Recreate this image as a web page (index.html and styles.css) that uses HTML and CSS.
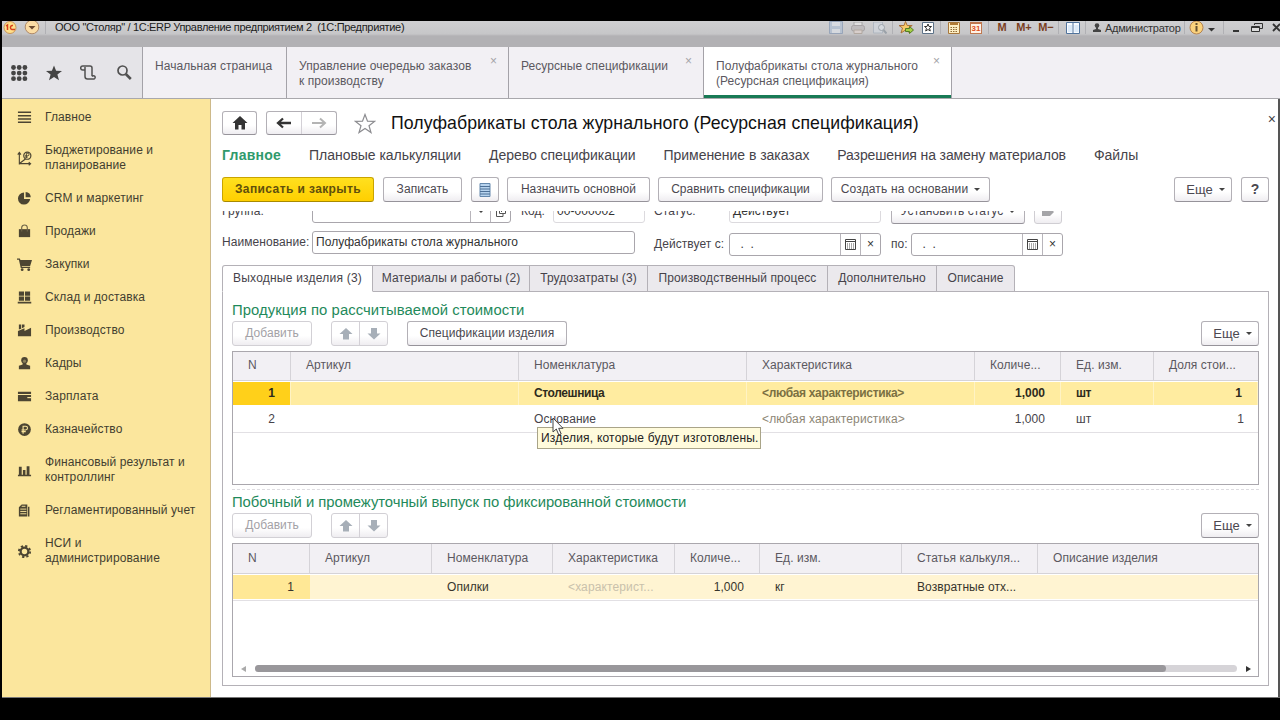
FILE: index.html
```html
<!DOCTYPE html>
<html lang="ru">
<head>
    <meta charset="UTF-8">
    <title>Полуфабрикаты стола журнального (Ресурсная спецификация)</title>
    <link rel="stylesheet" href="styles.css">
</head>
<body>
    <div class="window">
        <header class="titlebar">
            <svg class="logo" width="14" height="14" viewBox="0 0 14 14"><circle cx="7" cy="6.500" r="6" fill="#ffe08a" stroke="#c8955a"/><path d="M3 5l1.500-1v5M10 4.500a2 2 0 1 0-1 4h3" fill="none" stroke="#d8401c" stroke-width="1.500"/></svg>
            <svg class="menu-icon" width="16" height="14" viewBox="0 0 16 14"><circle cx="8" cy="6" r="6.800" fill="#fbdca4" stroke="#b08a68"/><path d="M4.500 5h7L8 8.500z" fill="#6d4a30"/></svg>
            <span class="sep"></span>
            <span class="app-title">ООО "Столяр" / 1С:ERP Управление предприятием 2 &nbsp;(1С:Предприятие)</span>
            <div class="sys-icons">
                <span class="slot faded"><svg width="14" height="13" viewBox="0 0 14 13"><path d="M.5.5h13v12H.5z" fill="#a9bdd6" stroke="#7189ac"/><path d="M3 1h8v4H3zM3 8h8v4H3z" fill="#e2e8f0"/></svg></span>
                <span class="slot faded"><svg width="14" height="12" viewBox="0 0 14 12"><rect x="3" y="0" width="8" height="4" fill="#eee" stroke="#888"/><rect x=".5" y="3.500" width="13" height="5.500" rx="2" fill="#b5b0b2" stroke="#8b8588"/><path d="M3 8h8v3.500H3z" fill="#e6d5cf" stroke="#a09080"/></svg></span>
                <span class="slot faded"><svg width="14" height="12" viewBox="0 0 14 12"><path d="M.5 0h9v11h-9z" fill="#d4dbe4" stroke="#9ba8b8"/><circle cx="8.500" cy="5.500" r="3" fill="#dfe7ee" stroke="#77838f"/><path d="M10.500 8l3 3.500" stroke="#77838f" stroke-width="2"/></svg></span>
                <span class="sep"></span>
                <span class="slot"><svg width="15" height="14" viewBox="0 0 15 14"><path d="M6.500.5l1.700 4h5L9.500 7l1.500 5-4.500-3L2 12l1.500-5L0 4.500h5z" fill="#f6ca6a" stroke="#a9713a"/><path d="M6.500 7.500h4V5.500l4 3.500-4 3.500V10.500h-4z" fill="#a6cf45" stroke="#547d24"/></svg></span>
                <span class="slot"><svg width="12" height="12" viewBox="0 0 12 12"><path d="M.5.5h11v11H.5z" fill="#fff" stroke="#5d7288"/><path d="M6 2l1 2.500h2.500l-2 1.700.8 2.800L6 7.500 3.700 9l.8-2.800-2-1.700H5z" fill="#fff" stroke="#333"/></svg></span>
                <span class="sep"></span>
                <span class="slot"><svg width="12" height="12" viewBox="0 0 12 12"><path d="M.5.5h11v11H.5z" fill="#fdeec4" stroke="#a8783c"/><path d="M2 2h8" stroke="#b07a35" stroke-width="2"/><path d="M2.500 5.500h7M2.500 7.500h7M2.500 9.500h7" stroke="#8e6b35" stroke-dasharray="1.500 1"/></svg></span>
                <span class="slot"><span class="calendar">31</span></span>
                <span class="sep"></span>
                <span class="slot mem">M</span>
                <span class="slot mem">M+</span>
                <span class="slot mem">M−</span>
                <span class="sep"></span>
                <span class="slot panels"><svg width="14" height="12" viewBox="0 0 14 12"><path d="M.5.5h13v11H.5z" fill="#f8fbff" stroke="#50739c"/><path d="M7 0v12" stroke="#50739c"/><path d="M2 3h4v7H2zM8.500 3h4v7h-4z" fill="#dceaf8"/></svg></span>
                <span class="sep"></span>
                <span class="user"><svg width="10" height="10" viewBox="0 0 10 10"><circle cx="5" cy="2.500" r="2.300" fill="#444"/><path d="M4 4h2v2l3 1v2H1V7l3-1z" fill="#444"/></svg><span class="user-name">Администратор</span></span>
                <span class="sep"></span>
                <span class="info"><svg width="15" height="14" viewBox="0 0 15 14"><circle cx="7.500" cy="6.500" r="6.500" fill="#fbd27c" stroke="#b58450"/><path d="M7.500 2v2M7.500 5v5.500" stroke="#665030" stroke-width="2"/></svg></span>
                <span class="info-arrow"><svg width="7" height="4"><path d="M0 0h7L3.500 3.500z" fill="#333"/></svg></span>
                <span class="sep"></span>
                <svg class="win-icons" width="54" height="12" viewBox="0 0 54 12"><path d="M7 9h6" stroke="#333" stroke-width="2"/><path d="M28.500 3V1.500h8v5H34" fill="none" stroke="#333"/><path d="M25.500 4.500h8v5h-8zM25.500 5.500h8" fill="#ddd" stroke="#333"/><path d="M47 2l7 7M54 2l-7 7" stroke="#333" stroke-width="1.800"/></svg>
            </div>
        </header>

        <nav class="open-tabs">
            <div class="tools">
                <svg width="18" height="18" viewBox="0 0 18 18" fill="#444"><g id="dots"><circle cx="3.500" cy="3.500" r="2.400"/><circle cx="9.200" cy="3.500" r="2.400"/><circle cx="14.900" cy="3.500" r="2.400"/></g><use href="#dots" y="5.600"/><use href="#dots" y="11.200"/></svg>
                <svg width="18" height="18" viewBox="0 0 18 18"><path d="M9 1.500l2.100 5.300 5.900.2-4.600 3.600 1.600 5.600L9 13l-5 3.200 1.600-5.600L1 7l5.900-.2z" fill="#444"/></svg>
                <svg width="18" height="18" viewBox="0 0 18 18" fill="none" stroke="#505050" stroke-width="1.500"><path d="M5 6H2.700a2 2 0 0 1 0-4H10a2 2 0 0 1 2 2v8M5 3v9.500a2.500 2.500 0 0 0 2.500 2.500H14a1.700 1.700 0 1 0-2-2.500"/></svg>
                <svg width="18" height="18" viewBox="0 0 18 18" fill="none" stroke="#505050"><circle cx="7.500" cy="6.500" r="4.500" stroke-width="1.700"/><path d="M10.800 10l5 5" stroke-width="2.600"/></svg>
            </div>
            <div class="open-tab tab-home">Начальная страница</div>
            <div class="open-tab tab-queue">Управление очередью заказов<br>к производству<span class="close">×</span></div>
            <div class="open-tab tab-specs">Ресурсные спецификации<span class="close">×</span></div>
            <div class="open-tab tab-current">Полуфабрикаты стола журнального<br>(Ресурсная спецификация)<span class="close">×</span></div>
        </nav>

        <div class="workspace">
            <aside class="sidebar">
                <a class="section"><svg viewBox="0 0 16 16"><path d="M1 2.500h14M1 6h14M1 9.500h14M1 13h14" stroke="#4c4532" stroke-width="1.600"/></svg><span>Главное</span></a>
                <a class="section"><svg viewBox="0 0 16 16" fill="none" stroke="#4c4532"><path d="M2.500 14.500V2M.8 3.800L2.500 1.500l1.700 2.300M2.500 13.500H14M12.500 11.800l2 1.700-2 1.700M3 13l6-4.500" stroke-width="1.200"/><circle cx="11" cy="5" r="3.800" stroke-width="1.300"/><path d="M10 7.500v-5h1.500a1.300 1.300 0 0 1 0 2.600H8.500M8.500 6.500h3"/></svg><span>Бюджетирование и<br>планирование</span></a>
                <a class="section"><svg viewBox="0 0 16 16" fill="#4c4532"><path d="M7.500 1.500v7H14a6.500 6.500 0 1 1-6.500-7z"/><path d="M9.200 1a6 6 0 0 1 5.500 5.700H9.200z"/></svg><span>CRM и маркетинг</span></a>
                <a class="section"><svg viewBox="0 0 16 16"><path d="M2 5.500h12V14H2z" fill="#4c4532"/><path d="M5 8V4a3 3 0 0 1 6 0v4" fill="none" stroke="#6d6448" stroke-width="1.200"/></svg><span>Продажи</span></a>
                <a class="section"><svg viewBox="0 0 16 16" fill="#4c4532"><path d="M0 1.500h3l.7 1.700H16L14 9.500H5l.3 1H14v1.300H4L2 3H0z"/><circle cx="5.500" cy="13.500" r="1.500"/><circle cx="12.500" cy="13.500" r="1.500"/></svg><span>Закупки</span></a>
                <a class="section"><svg viewBox="0 0 16 16" fill="#4c4532"><path d="M2 1.500h5.500v4.700H2zM8.500 1.500H14v4.700H8.500zM2 7h5.500v4.500H2zM8.500 7H14v4.500H8.500zM.8 12.500h14.400v1.800H.8z"/></svg><span>Склад и доставка</span></a>
                <a class="section"><svg viewBox="0 0 16 16" fill="#4c4532"><path d="M1 14V8.500l7-3v3L15 5v9z"/><path d="M2 1.500h2.500V6L2 7zM5.300 1.500H8v2.700L5.300 5.500z"/></svg><span>Производство</span></a>
                <a class="section"><svg viewBox="0 0 16 16" fill="#4c4532"><circle cx="8" cy="4.500" r="3.500"/><path d="M6 7h4v2l4 1.500V14H2v-3.500L6 9z"/><circle cx="8" cy="5.500" r="1.700" fill="#8b8058"/></svg><span>Кадры</span></a>
                <a class="section"><svg viewBox="0 0 16 16"><path d="M1 3h14v2.200H1zM1 6.500h14V13H1z" fill="#4c4532"/><path d="M11 8.500h4v1.300h-4z" fill="#fbe69d"/></svg><span>Зарплата</span></a>
                <a class="section"><svg viewBox="0 0 16 16"><circle cx="8" cy="8" r="6.800" fill="#4c4532"/><path d="M6.500 12.500V4.500h2.700a2 2 0 0 1 0 4H4.800M4.800 10.300h4.500" fill="none" stroke="#fbe69d" stroke-width="1.200"/></svg><span>Казначейство</span></a>
                <a class="section"><svg viewBox="0 0 16 16" fill="#4c4532"><path d="M1 12.500h14V14H1zM2 4h3v9H2zM6.300 7.500H9V13H6.300zM10.300 3.500h3V13h-3z"/></svg><span>Финансовый результат и<br>контроллинг</span></a>
                <a class="section"><svg viewBox="0 0 16 16"><path d="M2 4.500L5 1.500h6V14.500H2z" fill="#4c4532"/><path d="M12.500 4v10.500" stroke="#4c4532" stroke-width="1.500"/><path d="M3.500 6.500h6.500M3.500 9h6.500M3.500 11.500h6.500M5 3.500h4" stroke="#fbe69d"/></svg><span>Регламентированный учет</span></a>
                <a class="section"><svg viewBox="0 0 16 16" fill="none" stroke="#4c4532"><circle cx="8" cy="8" r="4.100" stroke-width="2.400"/><circle cx="8" cy="8" r="6" stroke-width="2" stroke-dasharray="2.400 2.310"/></svg><span>НСИ и<br>администрирование</span></a>
            </aside>

            <main class="form">
                <span class="form-close">×</span>
                <div class="title-row">
                    <button class="btn home"><svg width="16" height="14" viewBox="0 0 16 14"><path d="M8 0l7.500 7H13v6.500H9.500V9h-3v4.500H3V7H.5z" fill="#333"/></svg></button>
                    <div class="btn-pair">
                        <button><svg width="16" height="12" viewBox="0 0 16 12"><path d="M15 6H3M7 1.500L2 6l5 4.500" fill="none" stroke="#333" stroke-width="2.300"/></svg></button>
                        <button><svg width="16" height="12" viewBox="0 0 16 12"><path d="M1 6h12M9 1.500L14 6 9 10.500" fill="none" stroke="#b4b4b4" stroke-width="2"/></svg></button>
                    </div>
                    <svg class="fav" width="22" height="21" viewBox="0 0 22 21"><path d="M11 1.500l2.500 6.700 7 .2L15 12.700l2 6.800-6-4-6 4 2-6.800L1.500 8.400l7-.2z" fill="#fff" stroke="#8c8c90" stroke-width="1.200"/></svg>
                    <h1>Полуфабрикаты стола журнального (Ресурсная спецификация)</h1>
                </div>

                <nav class="links">
                    <b>Главное</b>
                    <a>Плановые калькуляции</a>
                    <a>Дерево спецификации</a>
                    <a>Применение в заказах</a>
                    <a class="narrow">Разрешения на замену материалов</a>
                    <a>Файлы</a>
                </nav>

                <div class="commands">
                    <button class="btn primary">Записать и закрыть</button>
                    <button class="btn save">Записать</button>
                    <button class="btn list"><svg width="12" height="14" viewBox="0 0 12 14"><path d="M1 .5h10v13H1z" fill="#b7d3ee" stroke="#6488ad"/><path d="M1 3.500h10M1 6h10M1 8.500h10M1 11h10" stroke="#4d7096"/></svg></button>
                    <button class="btn assign">Назначить основной</button>
                    <button class="btn compare">Сравнить спецификации</button>
                    <button class="btn create">Создать на основании<i class="arrow"></i></button>
                    <button class="btn more">Еще<i class="arrow"></i></button>
                    <button class="btn help">?</button>
                </div>

                <div class="fields">
                    <div class="row row-top">
                        <label class="label-first">Группа:</label>
                        <div class="input group"><span class="value"></span><span class="pick"><i class="arrow"></i></span><span class="pick"><svg width="10" height="10" viewBox="0 0 10 10" fill="none" stroke="#555"><path d="M3.500.5h6v6h-6zM3 3H.5v6.500H7V7M5 5l3-3"/></svg></span></div>
                        <label class="label-code">Код:</label>
                        <div class="input readonly code">00-000002</div>
                        <label class="label-second">Статус:</label>
                        <div class="input readonly status">Действует</div>
                        <button class="btn set-status">Установить статус<i class="arrow"></i></button>
                        <button class="btn tag"><svg width="12" height="10" viewBox="0 0 12 10"><path d="M0 1h8l4 4-4 4H0z" fill="#a5a5a8"/></svg></button>
                    </div>
                    <div class="row row-name">
                        <label class="label-first">Наименование:</label>
                        <div class="input name">Полуфабрикаты стола журнального</div>
                        <div class="period">
                            <label class="label-second">Действует с:</label>
                            <div class="input date"><span class="value">&nbsp;. &nbsp;.</span><span class="pick"><svg width="11" height="11" viewBox="0 0 11 11"><path d="M.5.5h10v10H.5z" fill="none" stroke="#444"/><path d="M1 2.500h9" stroke="#444"/><path d="M2 5h7M2 7h7M2 9h7" stroke="#555" stroke-dasharray="1 1"/></svg></span><span class="pick">×</span></div>
                            <label class="label-to">по:</label>
                            <div class="input date"><span class="value">&nbsp;. &nbsp;.</span><span class="pick"><svg width="11" height="11" viewBox="0 0 11 11"><path d="M.5.5h10v10H.5z" fill="none" stroke="#444"/><path d="M1 2.500h9" stroke="#444"/><path d="M2 5h7M2 7h7M2 9h7" stroke="#555" stroke-dasharray="1 1"/></svg></span><span class="pick">×</span></div>
                        </div>
                    </div>
                </div>

                <div class="page-tabs">
                    <span class="active">Выходные изделия (3)</span>
                    <span class="t2">Материалы и работы (2)</span>
                    <span class="t3">Трудозатраты (3)</span>
                    <span class="t4">Производственный процесс</span>
                    <span class="t5">Дополнительно</span>
                    <span class="t6">Описание</span>
                </div>

                <div class="page">
                    <h2>Продукция по рассчитываемой стоимости</h2>
                    <div class="table-bar">
                        <button class="btn add">Добавить</button>
                        <div class="btn-pair moves">
                            <button><svg width="14" height="12" viewBox="0 0 14 12"><path d="M7 0l6.500 6H10v5.500H4V6H.5z" fill="#a7afb8"/></svg></button>
                            <button><svg width="14" height="12" viewBox="0 0 14 12"><path d="M7 11.500L.5 5.500H4V0h6v5.500h3.500z" fill="#a7afb8"/></svg></button>
                        </div>
                        <button class="btn item-specs">Спецификации изделия</button>
                        <button class="btn more">Еще<i class="arrow"></i></button>
                    </div>
                    <div class="grid products">
                        <div class="tr head"><span>N</span><span>Артикул</span><span>Номенклатура</span><span>Характеристика</span><span>Количе...</span><span>Ед. изм.</span><span>Доля стои...</span></div>
                        <div class="tr selected"><span class="num">1</span><span></span><span>Столешница</span><span class="hint">&lt;любая характеристика&gt;</span><span class="num">1,000</span><span>шт</span><span class="num">1</span></div>
                        <div class="tr"><span class="num">2</span><span></span><span>Основание</span><span class="hint">&lt;любая характеристика&gt;</span><span class="num">1,000</span><span>шт</span><span class="num">1</span></div>
                    </div>
                    <div class="splitter"></div>
                    <h2 class="narrow">Побочный и промежуточный выпуск по фиксированной стоимости</h2>
                    <div class="table-bar">
                        <button class="btn add">Добавить</button>
                        <div class="btn-pair moves">
                            <button><svg width="14" height="12" viewBox="0 0 14 12"><path d="M7 0l6.500 6H10v5.500H4V6H.5z" fill="#a7afb8"/></svg></button>
                            <button><svg width="14" height="12" viewBox="0 0 14 12"><path d="M7 11.500L.5 5.500H4V0h6v5.500h3.500z" fill="#a7afb8"/></svg></button>
                        </div>
                        <button class="btn more">Еще<i class="arrow"></i></button>
                    </div>
                    <div class="grid byproducts">
                        <div class="tr head"><span>N</span><span>Артикул</span><span>Номенклатура</span><span>Характеристика</span><span>Количе...</span><span>Ед. изм.</span><span>Статья калькуля...</span><span>Описание изделия</span></div>
                        <div class="tr current"><span class="num">1</span><span></span><span>Опилки</span><span class="hint">&lt;характерист...</span><span class="num">1,000</span><span>кг</span><span>Возвратные отх...</span><span></span></div>
                        <div class="scroll">
                            <svg width="5" height="6"><path d="M5 0v6L0 3z" fill="#aaa"/></svg>
                            <div class="track"><div class="thumb"></div></div>
                            <svg width="5" height="6"><path d="M0 0v6l5-3z" fill="#333"/></svg>
                        </div>
                    </div>
                </div>
            </main>
        </div>
    </div>

    <div class="tooltip">Изделия, которые будут изготовлены.</div>
    <svg class="cursor" width="13" height="20" viewBox="0 0 13 20"><path d="M1 1v14l3.300-3 2.500 6 2.400-1-2.500-5.700H11z" fill="#fff" stroke="#444"/></svg>
</body>
</html>
```
FILE: styles.css
```css
* {
    box-sizing: border-box;
}
body {
    margin: 0;
    height: 720px;
    overflow: hidden;
    background: #000;
    font-family: "Liberation Sans", Arial, sans-serif;
    font-size: 12px;
    line-height: 15px;
    letter-spacing: .06px;
    color: #46434a;
    padding: 21px 0 0 2px;
}
svg {
    display: block;
    flex: none;
}
button {
    font: inherit;
    letter-spacing: inherit;
    color: inherit;
    padding: 0;
}
.window {
    height: 677px;
    display: flex;
    flex-direction: column;
    border-bottom: 1px solid #777;
}

/* title bar */
.titlebar {
    height: 26px;
    flex: none;
    display: flex;
    align-items: flex-start;
    background: linear-gradient(#cfcfd1, #c6c6c8 13px, #b2b1b4 15px, #b2b1b4);
    overflow: hidden;
}
.logo {
    margin-left: 1px;
}
.menu-icon {
    margin-left: 7px;
}
.sep {
    width: 1px;
    height: 13px;
    margin: 0 2px 0 1px;
    background: #b0b0b4;
}
.menu-icon + .sep {
    margin: 0 0 0 5px;
}
.app-title {
    margin-left: 9px;
    line-height: 12px;
    font-size: 11px;
    letter-spacing: -.33px;
    color: #1c1c1c;
    white-space: nowrap;
}
.sys-icons {
    margin-left: auto;
    display: flex;
    height: 13px;
    align-items: center;
}
.slot {
    width: 22px;
    display: flex;
    justify-content: center;
    align-items: center;
}
.faded {
    opacity: .55;
}
.calendar {
    width: 12px;
    height: 12px;
    border: 1px solid #c07850;
    border-top-width: 2px;
    background: #fff3e6;
    color: #e0501c;
    font-size: 8px;
    font-weight: bold;
    line-height: 10px;
    text-align: center;
}
.mem {
    color: #7a3f1f;
    font-weight: bold;
    font-size: 11px;
}
.panels {
    width: 23px;
}
.user {
    display: flex;
    align-items: center;
    width: 95px;
    padding-left: 4px;
    gap: 3px;
    font-size: 11px;
    letter-spacing: -.3px;
    line-height: 12px;
    color: #333;
}
.info {
    width: 20px;
    padding-left: 2px;
}
.info-arrow {
    width: 15px;
    padding: 5px 0 0 1px;
}

/* open windows */
.open-tabs {
    height: 52px;
    flex: none;
    display: flex;
    background: #f2f0f4;
    border-bottom: 1px solid #a9a8ac;
}
.tools {
    width: 140px;
    display: flex;
    align-items: center;
    gap: 17px;
    padding-left: 8px;
    background: #e5e4e8;
}
.open-tab {
    position: relative;
    border-left: 1px solid #a4a2a8;
    padding: 12px 0 0 12px;
    color: #5b585f;
    white-space: nowrap;
}
.close {
    position: absolute;
    right: 11px;
    top: 7px;
    color: #a5a3a8;
}
.tab-home {
    width: 144px;
}
.tab-queue {
    width: 222px;
}
.tab-specs {
    width: 195px;
}
.tab-current {
    width: 249px;
    background: #fff;
    border-right: 1px solid #a4a2a8;
    box-shadow: inset 0 -3px #187a55;
}

/* sections */
.workspace {
    flex: 1;
    display: flex;
    background: #fff;
    min-height: 0;
}
.sidebar {
    width: 209px;
    flex: none;
    padding-top: 2px;
    background: #fbe69d;
    border-right: 1px solid #cdb98a;
    color: #433e30;
}
.section {
    display: flex;
    align-items: center;
    padding: 9px 0 9px 15px;
    letter-spacing: .11px;
    white-space: nowrap;
}
.section svg {
    width: 15px;
    height: 15px;
    margin-right: 13px;
}

/* form */
.form {
    position: relative;
    flex: 1;
    min-width: 0;
    padding: 12px 9px 0 11px;
    border-right: 2px solid #555;
}
.form-close {
    position: absolute;
    top: 13px;
    right: 2px;
    font-size: 14px;
}
.btn, .btn-pair {
    flex: none;
    display: flex;
    align-items: center;
    justify-content: center;
    height: 25px;
    border: 1px solid #b3b0b6;
    border-bottom-color: #96939a;
    border-radius: 3px;
    background: linear-gradient(#fff, #fff 60%, #efedf1);
    color: #4b4850;
    white-space: nowrap;
}
.btn-pair button {
    height: 100%;
    flex: 1;
    display: flex;
    align-items: center;
    justify-content: center;
    border: 0;
    background: none;
}
.btn-pair button + button {
    border-left: 1px solid #d3d0d6;
}
.arrow {
    width: 0;
    border: 3px solid transparent;
    border-top: 3px solid #444;
    border-bottom: 0;
    margin-left: 6px;
}
.title-row {
    display: flex;
    align-items: center;
    height: 24px;
}
.title-row .btn, .title-row .btn-pair {
    height: 24px;
}
.home {
    width: 35px;
}
.title-row .btn-pair {
    width: 71px;
    margin-left: 9px;
}
.fav {
    margin-left: 17px;
}
h1 {
    margin: 0 0 0 15px;
    font-size: 17.7px;
    font-weight: normal;
    line-height: 24px;
    letter-spacing: .08px;
    color: #111;
    white-space: nowrap;
}
.links {
    display: flex;
    gap: 28px;
    height: 20px;
    margin-top: 10px;
    font-size: 14px;
    line-height: 20px;
    letter-spacing: -.04px;
    white-space: nowrap;
}
.links b {
    color: #2f9a6c;
    letter-spacing: .25px;
}
.links .narrow {
    letter-spacing: -.12px;
}
.commands {
    display: flex;
    margin-top: 12px;
}
.primary {
    width: 152px;
    background: linear-gradient(#ffe01f, #ffcf00);
    border-color: #c9a400;
    border-bottom-color: #a88a00;
    font-weight: bold;
    letter-spacing: .4px;
    color: #5f4f0c;
}
.save {
    width: 79px;
    margin-left: 9px;
}
.list {
    width: 28px;
    margin-left: 9px;
}
.assign {
    width: 143px;
    margin-left: 8px;
}
.compare {
    width: 165px;
    margin-left: 8px;
    letter-spacing: 0;
}
.create {
    width: 159px;
    margin-left: 8px;
    letter-spacing: .15px;
}
.more {
    width: 58px;
    margin-left: auto;
    padding-left: 5px;
    font-size: 13px;
}
.help {
    width: 28px;
    margin-left: 9px;
    font-size: 14px;
    font-weight: bold;
}

/* fields, the upper row is scrolled under the command bar */
.fields {
    margin-top: 9px;
    height: 54px;
    overflow: hidden;
}
.row {
    display: flex;
    align-items: center;
    height: 23px;
    white-space: nowrap;
}
.row-top {
    margin-top: -11px;
}
.row-name {
    margin-top: 8px;
}
.period {
    display: flex;
    align-items: center;
    padding-top: 3px;
}
.input {
    display: flex;
    align-items: center;
    height: 23px;
    border: 1px solid #a9a6ac;
    border-radius: 3px;
    padding-left: 3px;
    color: #333;
}
.readonly {
    border-color: #dcdade;
}
.value {
    flex: 1;
    padding-left: 4px;
}
.pick {
    width: 20px;
    height: 100%;
    display: flex;
    align-items: center;
    justify-content: center;
    border-left: 1px solid #b8b5bb;
}
.pick .arrow {
    margin: 0;
}
.label-first {
    width: 90px;
}
.group {
    width: 199px;
}
.label-code {
    width: 32px;
    margin-left: 10px;
}
.code {
    width: 92px;
}
.label-second {
    width: 75px;
    margin-left: 9px;
}
.status {
    width: 152px;
}
.set-status {
    width: 134px;
    margin-left: 10px;
}
.tag {
    width: 28px;
    margin-left: 9px;
    border-color: #d0ced3;
}
.name {
    width: 323px;
}
.row-name .label-second {
    margin-left: 19px;
}
.date {
    width: 152px;
}
.label-to {
    width: 20px;
    margin-left: 10px;
}

/* pages */
.page-tabs {
    display: flex;
    height: 27px;
    position: relative;
    margin-bottom: -1px;
}
.page-tabs span {
    display: flex;
    align-items: center;
    justify-content: center;
    background: #ebe9ed;
    border: 1px solid #b4b1b7;
    border-left: 0;
    letter-spacing: .1px;
    white-space: nowrap;
}
.page-tabs .active {
    width: 151px;
    background: #fff;
    border-left: 1px solid #b4b1b7;
    border-bottom-color: #fff;
    border-radius: 3px 0 0;
    letter-spacing: .22px;
}
.page-tabs .t2 {
    width: 157px;
}
.page-tabs .t3 {
    width: 118px;
}
.page-tabs .t4 {
    width: 180px;
}
.page-tabs .t5 {
    width: 109px;
}
.page-tabs .t6 {
    width: 78px;
    border-radius: 0 3px 0 0;
}
.page {
    height: 395px;
    border: 1px solid #b4b1b7;
    padding: 8px 9px 0;
}
h2 {
    margin: 0;
    font-size: 14.85px;
    font-weight: normal;
    line-height: 20px;
    height: 20px;
    color: #1f8a5b;
    white-space: nowrap;
}
h2.narrow {
    letter-spacing: -.05px;
}
.table-bar {
    display: flex;
    margin: 1px 0 5px;
}
.add {
    width: 80px;
    border-color: #d2d0d5;
    color: #a3a1a6;
}
.moves {
    width: 57px;
    margin-left: 19px;
    border-color: #d2d0d5;
}
.item-specs {
    width: 160px;
    margin-left: 19px;
}
.grid {
    position: relative;
    height: 134px;
    border: 1px solid #aaa7ad;
}
.tr {
    display: grid;
    height: 26px;
    border-bottom: 1px solid #e2e0e4;
}
.tr span {
    padding: 5px 16px 0 15px;
    white-space: nowrap;
    color: #46434a;
}
.tr span:last-child {
    padding-right: 14px;
}
.products .tr {
    grid-template-columns: 58px 228px 228px 228px 86px 93px 1fr;
}
.byproducts .tr {
    grid-template-columns: 77px 122px 121px 122px 85px 142px 136px 1fr;
}
.tr.head {
    height: 30px;
    background: #f2f0f4;
    border-bottom: 1px solid #d5d3d8;
}
.products .tr.head {
    height: 29px;
}
.tr.head span {
    padding: 7px 0 0 15px;
    border-right: 1px solid #d5d3d8;
    color: #5b585f;
}
.products .head span {
    padding-top: 6px;
}
.tr.head span:last-child {
    border-right: 0;
}
.tr .num {
    text-align: right;
}
.tr .hint {
    color: #8d8676;
    letter-spacing: .12px;
}
.tr.selected {
    border-bottom: 2px solid #fff;
    padding-top: 1px;
}
.tr.selected span {
    background: #ffeca0;
    border-right: 1px solid #fff3c4;
    padding-top: 4px;
    font-weight: bold;
    color: #2e2a1c;
    letter-spacing: -.4px;
}
.tr.selected .num {
    letter-spacing: 0;
    padding-right: 15px;
}
.tr.selected span:first-child {
    background: #ffd01a;
}
.tr.selected .hint {
    color: #7b7042;
    letter-spacing: -.34px;
}
.tr.current {
    height: 27px;
    padding: 1px 0;
}
.tr.current span {
    background: #fff4d2;
    color: #37342c;
}
.tr.current span:first-child {
    background: #ffe896;
}
.tr.current .hint {
    color: #c9c1ac;
}
.splitter {
    margin: 4px 0 2px;
    border-top: 1px dashed #dddbe0;
}
.scroll {
    position: absolute;
    left: 8px;
    right: 7px;
    bottom: 4px;
    display: flex;
    align-items: center;
    justify-content: space-between;
}
.track {
    width: 982px;
    height: 7px;
    border-radius: 4px;
    background: #d6d4d8;
}
.thumb {
    width: 911px;
    height: 7px;
    border-radius: 4px;
    background: #99979b;
}

.tooltip {
    position: absolute;
    left: 537px;
    top: 427px;
    width: 224px;
    height: 22px;
    padding: 3px 0 0 3px;
    background: #fffbdc;
    border: 1px solid #a9a488;
    color: #222;
    letter-spacing: .21px;
    white-space: nowrap;
}
.cursor {
    position: absolute;
    left: 552px;
    top: 417px;
}
```
